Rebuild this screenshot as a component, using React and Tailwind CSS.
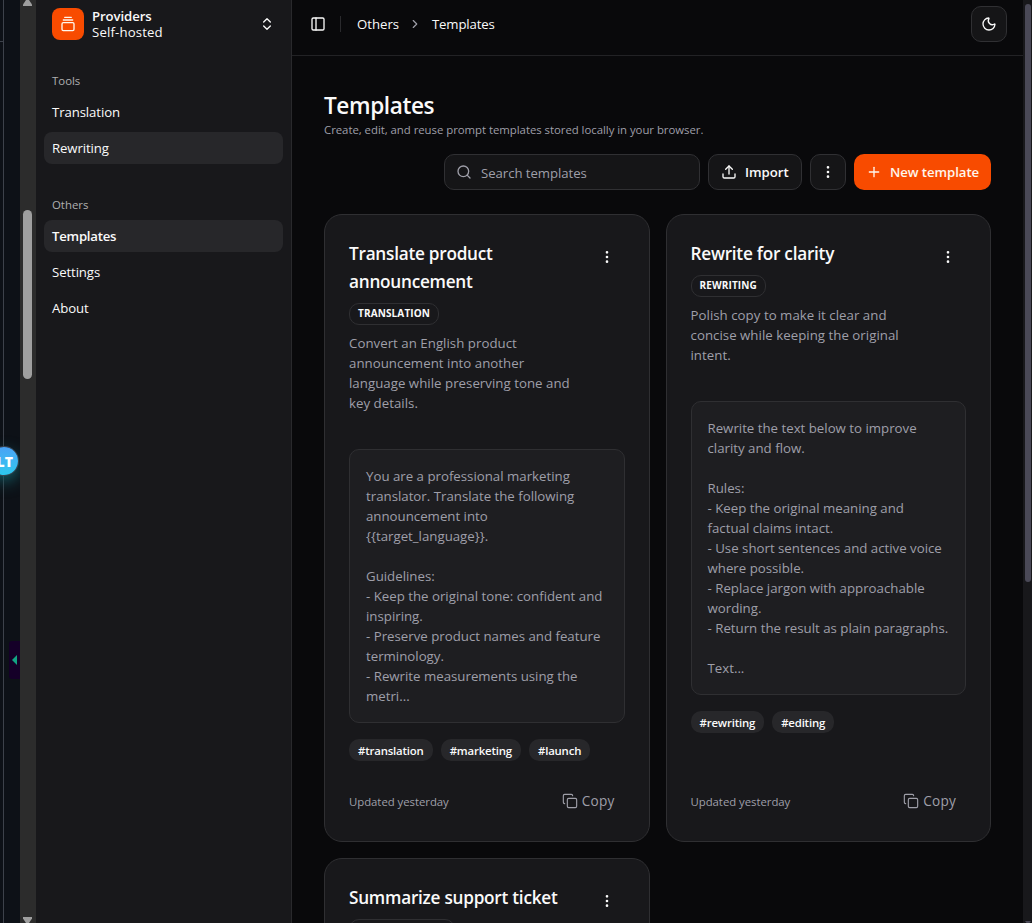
import React from "react";
import { ChevronRight, ChevronsUpDown, Copy, EllipsisVertical, GalleryVerticalEnd, Moon, PanelLeft, Plus, Search, Upload } from "lucide-react";

const templates = [
  {
    title: ["Translate product", "announcement"],
    kind: "TRANSLATION",
    description: ["Convert an English product", "announcement into another", "language while preserving tone and", "key details."],
    body: [
      "You are a professional marketing", "translator. Translate the following", "announcement into", "{{target_language}}.", "",
      "Guidelines:", "- Keep the original tone: confident and", "inspiring.", "- Preserve product names and feature", "terminology.",
      "- Rewrite measurements using the", "metri...",
    ],
    tags: ["#translation", "#marketing", "#launch"],
  },
  {
    title: ["Rewrite for clarity"],
    kind: "REWRITING",
    description: ["Polish copy to make it clear and", "concise while keeping the original", "intent."],
    body: [
      "Rewrite the text below to improve", "clarity and flow.", "", "Rules:", "- Keep the original meaning and", "factual claims intact.",
      "- Use short sentences and active voice", "where possible.", "- Replace jargon with approachable", "wording.",
      "- Return the result as plain paragraphs.", "", "Text...",
    ],
    tags: ["#rewriting", "#editing"],
  },
  {
    title: ["Summarize support ticket"],
    kind: null,
    description: [],
    body: [],
    tags: [],
  },
];

function EdgeStrip() {
  return (
    <div className="relative flex w-5 shrink-0 overflow-hidden bg-[#0d1117]">
      <div className="h-[42px] w-[3px] border-b border-[#3d424b]" />
      <div className="w-px bg-[#3d424b]" />
      <div className="absolute -left-[10px] top-[447px] flex size-7 items-center justify-end rounded-full bg-gradient-to-b from-[#4aa3f5] to-[#2cc8ee] pr-[5px] text-[14px] font-extrabold text-white shadow-[0_0_0_1px_#3b4350,0_6px_16px_#14606a]">LT</div>
      <div className="absolute left-[9px] top-[641px] flex h-[38px] w-[11px] items-center rounded-l-[3px] bg-[#150028] pl-[3px]">
        <svg width="5" height="10" viewBox="0 0 5 10"><path d="M5 0v10L0 5z" fill="#12a583" /></svg>
      </div>
    </div>
  );
}

function ScrollRail() {
  return (
    <div className="flex w-4 shrink-0 flex-col items-center bg-[#2c2c2c]">
      <svg className="-ml-px" width="9" height="6" viewBox="0 0 9 6"><path d="M3 0h3l3 4.5V6H0V4.5z" fill="#9f9f9f" /></svg>
      <div className="-ml-px mt-[204px] h-[169px] w-[9px] rounded-full bg-[#9f9f9f]" />
      <svg className="-ml-px mt-auto" width="9" height="6" viewBox="0 0 9 6"><path d="M0 0h9v1.500L6 6H3L0 1.500z" fill="#9f9f9f" /></svg>
    </div>
  );
}

function NavGroup({ label, items }) {
  return (
    <div className="flex flex-col p-2">
      <div className="flex h-8 items-center px-2 pt-0.5 text-[11.4px] font-medium text-[#afafb1]">{label}</div>
      <div className="flex flex-col gap-1">
        {items.map((item) => (
          <div
            key={item.name}
            className={`flex h-8 items-center rounded-lg px-2 pt-0.5 text-[13.2px] text-zinc-50 ${item.filled ? "bg-[#27272a]" : ""} ${item.active ? "font-semibold tracking-[-0.25px]" : "tracking-[-0.1px]"}`}
          >
            {item.name}
          </div>
        ))}
      </div>
    </div>
  );
}

function Sidebar() {
  return (
    <aside className="flex w-64 shrink-0 flex-col gap-2 border-r border-[#29292c] bg-[#18181b]">
      <div className="flex h-12 items-center gap-2 pl-4 pr-4">
        <div className="flex size-8 items-center justify-center rounded-lg bg-[#f84b00] text-orange-50">
          <GalleryVerticalEnd className="size-4" />
        </div>
        <div className="flex flex-1 flex-col text-[13.2px] leading-4 text-zinc-50">
          <span className="font-semibold tracking-[-0.1px]">Providers</span>
          <span className="tracking-[0.15px]">Self-hosted</span>
        </div>
        <ChevronsUpDown className="size-4 text-zinc-50" />
      </div>
      <NavGroup label="Tools" items={[{ name: "Translation" }, { name: "Rewriting", filled: true }]} />
      <NavGroup label="Others" items={[{ name: "Templates", filled: true, active: true }, { name: "Settings" }, { name: "About" }]} />
    </aside>
  );
}

function Lines({ items, className }) {
  return (
    <div className={className}>
      {items.map((line, i) => (
        <div key={i} className="h-5 whitespace-nowrap leading-5">{line}</div>
      ))}
    </div>
  );
}

function TemplateCard({ template }) {
  return (
    <article className="flex flex-col rounded-[18px] border border-[#2f2f32] bg-[#18181b] p-6">
      <div className="flex justify-between">
        <div className="min-w-0">
          <h2 className="text-[17.2px] font-semibold tracking-[-0.25px] text-zinc-50">
            {template.title.map((line) => <div key={line} className="h-7 whitespace-nowrap leading-[30px]">{line}</div>)}
          </h2>
          <div className={`mt-2 inline-flex h-[22px] items-center rounded-[10px] border border-[#2f2f32] px-2 pb-px text-[10px] font-bold tracking-[0.13px] text-zinc-50 ${template.kind ? "" : "w-[106px]"}`}>
            {template.kind}
          </div>
        </div>
        <div className="flex size-9 shrink-0 items-center justify-center text-zinc-50">
          <EllipsisVertical className="size-4" />
        </div>
      </div>
      {template.body.length > 0 && (
        <>
          <Lines items={template.description} className="mt-2 text-[13.25px] tracking-[0.03px] text-[#9f9fa9]" />
          <Lines items={template.body} className="mt-9 rounded-[10px] border border-[#2f2f32] bg-[#1e1e21] p-4 text-[13.25px] text-[#9f9fa9]" />
          <div className="mt-4 flex gap-2">
            {template.tags.map((tag) => (
              <span key={tag} className="flex h-[22px] items-center rounded-[10px] bg-[#27272a] px-[9px] pt-0.5 text-[11.4px] font-semibold tracking-[-0.18px] text-zinc-50">{tag}</span>
            ))}
          </div>
          <div className="mt-auto flex h-8 items-center justify-between pr-[10px] text-[#9f9fa9]">
            <span className="pt-0.5 text-[11.4px] tracking-[-0.05px]">Updated yesterday</span>
            <span className="flex items-center gap-1 text-[13.6px] font-medium"><Copy className="size-4" strokeWidth={1.7} /><span className="pt-px tracking-[0.2px]">Copy</span></span>
          </div>
        </>
      )}
    </article>
  );
}

export default function App() {
  return (
    <div className="flex h-[923px] w-[1032px] overflow-hidden bg-[#09090b] font-['Open_Sans',sans-serif] text-zinc-50">
      <EdgeStrip />
      <ScrollRail />
      <Sidebar />
      <main className="flex min-w-0 flex-1 flex-col">
        <header className="flex h-14 shrink-0 items-start border-b border-[#222225] pl-[18px] pr-4">
          <div className="flex h-12 flex-1 items-center">
            <PanelLeft className="size-4" />
            <div className="ml-[14px] h-4 w-px bg-[#2a2a2d]" />
            <span className="ml-4 w-[42px] pt-0.5 text-[13.2px]">Others</span>
            <ChevronRight className="ml-[9px] size-[14px] text-[#9f9fa9]" />
            <span className="ml-[10px] pt-0.5 text-[13.2px] tracking-[-0.15px]">Templates</span>
          </div>
          <button className="mt-1.5 flex size-9 items-center justify-center rounded-[10px] border border-[#303033] bg-[#151517]">
            <Moon className="size-4" />
          </button>
        </header>
        <div className="flex flex-1 flex-col overflow-hidden px-8 pt-[34px]">
          <h1 className="h-8 shrink-0 text-[22.6px] font-semibold leading-[31px] tracking-[-0.4px]">Templates</h1>
          <p className="h-4 shrink-0 text-[11.4px] leading-4 tracking-[-0.04px] text-[#9f9fa9]">Create, edit, and reuse prompt templates stored locally in your browser.</p>
          <div className="mt-4 flex shrink-0 justify-end gap-2">
            <div className="flex h-9 w-64 items-center rounded-[10px] border border-[#303033] bg-[#151517] pl-[11px] text-[13.2px] text-[#9f9fa9]">
              <Search className="size-4" />
              <span className="ml-[9px] pt-[3px] tracking-[-0.05px]">Search templates</span>
            </div>
            <button className="flex h-9 w-[94px] items-center rounded-[10px] border border-[#303033] bg-[#151517] pl-3 text-[13.2px] font-semibold">
              <Upload className="size-4" />
              <span className="ml-2 pt-px">Import</span>
            </button>
            <button className="flex size-9 items-center justify-center rounded-[10px] border border-[#303033] bg-[#151517]">
              <EllipsisVertical className="size-4" />
            </button>
            <button className="flex h-9 w-[137px] items-center whitespace-nowrap rounded-[10px] bg-[#f84b00] pl-3 text-[13.2px] font-semibold text-orange-50">
              <Plus className="size-4" />
              <span className="ml-2 pt-px tracking-[-0.06px]">New template</span>
            </button>
          </div>
          <div className="mt-6 grid grid-cols-2 grid-rows-[628px_628px] gap-4">
            {templates.map((template) => <TemplateCard key={template.title[0]} template={template} />)}
          </div>
        </div>
      </main>
      <div className="flex w-[9px] shrink-0 flex-col bg-[#18181b] pl-[2px] pt-1">
        <div className="h-[578px] w-1.5 rounded-full bg-[#4a4957]" />
        <svg className="mt-auto" width="6" height="3" viewBox="0 0 6 3"><path d="M0 1h6L4.500 3h-3z" fill="#4a4957" /></svg>
      </div>
    </div>
  );
}
